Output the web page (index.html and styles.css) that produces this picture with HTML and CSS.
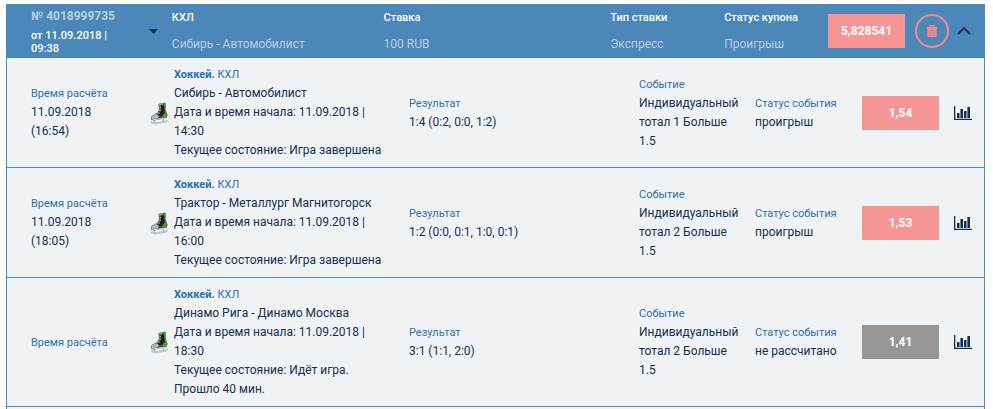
FILE: index.html
```
<!DOCTYPE html>
<html lang="ru">
  <head>
    <meta charset="UTF-8" />
    <meta name="viewport" content="width=device-width, initial-scale=1.0" />
    <title>История ставок</title>
    <link rel="stylesheet" href="styles.css">
  </head>
  <body>
    <!-- shared icons -->
    <svg class="sprite" aria-hidden="true">
      <symbol id="skate" viewBox="0 0 20 24">
        <path d="M1 21 L5 22.5 L16 20.5 L17.5 19" fill="none" stroke="#b5cbd3" stroke-width="2" />
        <path d="M4 19 L5 22 M13 18 L14 21" stroke="#a9b6bb" stroke-width="1.5" />
        <path d="M8.5 3 L14.5 1.5 L16 3 L15.5 8 L17.5 14 L16.5 17 L4 19.5 L1 18.5 L1.5 15 L7 12 L9 9 Z" fill="#4a4e4e" />
        <path d="M11 4 L14 3 L14 9 L15 13 L12 15 L8 15 L8 13 L11 10 Z" fill="#1d2020" />
        <path d="M8.5 3 L13 2 L12.5 4 L9 5 Z" fill="#979d9d" />
        <path d="M13 2 L16 2 L16 6 L14 5.5 Z" fill="#35b51c" />
        <path d="M15 8 L17.5 14 L16.5 16 L12 16.5 L13.5 13 L15 12 Z" fill="#4a9a2c" />
        <path d="M1.5 15.5 L6 13 L9 15 L7.5 17.5 L2 18 Z" fill="#b4b9b9" />
        <path d="M8.5 7 L11 6.5 M8.5 9.5 L11 9 M7 12 L10 12" stroke="#b0b5b5" />
        <path d="M2 19 L16 17" stroke="#d5dada" />
      </symbol>
      <symbol id="chart" viewBox="0 0 18 14">
        <path d="M0 0 H1.3 V12.7 H18 V14 H0 Z" />
        <path d="M3 7 H5.5 V12 H3 Z M6.4 3 H9 V12 H6.4 Z M10 5 H12.5 V12 H10 Z M13.4 1 H16 V12 H13.4 Z" />
      </symbol>
    </svg>

    <div class="coupon">
      <div class="coupon-header">
        <div class="coupon-number">
          <div class="number">№ 4018999735</div>
          <div class="date">от 11.09.2018 | 09:38</div>
        </div>
        <button type="button" class="icon-btn caret" aria-label="Меню купона">
          <svg width="9" height="5" viewBox="0 0 9 5"><path d="M0 0 H9 L4.5 5 Z" /></svg>
        </button>
        <div class="info">
          <div class="info-title">КХЛ</div>
          <div class="info-value">Сибирь - Автомобилист</div>
        </div>
        <div class="info">
          <div class="info-title">Ставка</div>
          <div class="info-value">100 RUB</div>
        </div>
        <div class="info">
          <div class="info-title">Тип ставки</div>
          <div class="info-value">Экспресс</div>
        </div>
        <div class="info">
          <div class="info-title">Статус купона</div>
          <div class="info-value">Проигрыш</div>
        </div>
        <div class="coef">5,828541</div>
        <button type="button" class="icon-btn trash" aria-label="Удалить">
          <svg width="12" height="12" viewBox="0 0 12 12">
            <path d="M4 2 V0.7 H8 V2" fill="none" stroke="#f08a8e" stroke-width="1.2" />
            <path d="M0.5 1.8 H11.5 V3.2 H0.5 Z M1.2 3 H10.8 V11 L10 12 H2 L1.2 11 Z" fill="#f08a8e" />
            <path d="M3.8 4.5 V10.5 M6 4.5 V10.5 M8.2 4.5 V10.5" stroke="#a98ba2" stroke-width="0.9" />
          </svg>
        </button>
        <button type="button" class="icon-btn chevron" aria-label="Свернуть">
          <svg width="14" height="8" viewBox="0 0 14 8"><path d="M1 7 L7 1 L13 7" /></svg>
        </button>
      </div>

      <div class="event-row">
        <div class="time">
          <div class="label">Время расчёта</div>
          <div>11.09.2018 (16:54)</div>
        </div>
        <svg class="skate"><use href="#skate" /></svg>
        <div class="details">
          <div class="label"><b>Хоккей.</b> КХЛ</div>
          <div>Сибирь - Автомобилист</div>
          <div>Дата и время начала: 11.09.2018 | 14:30</div>
          <div>Текущее состояние: Игра завершена</div>
        </div>
        <div class="result">
          <div class="label">Результат</div>
          <div>1:4 (0:2, 0:0, 1:2)</div>
        </div>
        <div class="event">
          <div class="label">Событие</div>
          <div>Индивидуальный тотал 1 Больше 1.5</div>
        </div>
        <div class="status">
          <div class="label">Статус события</div>
          <div>проигрыш</div>
        </div>
        <div class="coef">1,54</div>
        <a href="#" class="stats" aria-label="Статистика"><svg width="18" height="14"><use href="#chart" /></svg></a>
      </div>

      <div class="event-row">
        <div class="time">
          <div class="label">Время расчёта</div>
          <div>11.09.2018 (18:05)</div>
        </div>
        <svg class="skate"><use href="#skate" /></svg>
        <div class="details">
          <div class="label"><b>Хоккей.</b> КХЛ</div>
          <div>Трактор - Металлург Магнитогорск</div>
          <div>Дата и время начала: 11.09.2018 | 16:00</div>
          <div>Текущее состояние: Игра завершена</div>
        </div>
        <div class="result">
          <div class="label">Результат</div>
          <div>1:2 (0:0, 0:1, 1:0, 0:1)</div>
        </div>
        <div class="event">
          <div class="label">Событие</div>
          <div>Индивидуальный тотал 2 Больше 1.5</div>
        </div>
        <div class="status">
          <div class="label">Статус события</div>
          <div>проигрыш</div>
        </div>
        <div class="coef">1,53</div>
        <a href="#" class="stats" aria-label="Статистика"><svg width="18" height="14"><use href="#chart" /></svg></a>
      </div>

      <div class="event-row">
        <div class="time">
          <div class="label">Время расчёта</div>
        </div>
        <svg class="skate"><use href="#skate" /></svg>
        <div class="details">
          <div class="label"><b>Хоккей.</b> КХЛ</div>
          <div>Динамо Рига - Динамо Москва</div>
          <div>Дата и время начала: 11.09.2018 | 18:30</div>
          <div>Текущее состояние: Идёт игра. Прошло 40 мин.</div>
        </div>
        <div class="result">
          <div class="label">Результат</div>
          <div>3:1 (1:1, 2:0)</div>
        </div>
        <div class="event">
          <div class="label">Событие</div>
          <div>Индивидуальный тотал 2 Больше 1.5</div>
        </div>
        <div class="status">
          <div class="label">Статус события</div>
          <div>не рассчитано</div>
        </div>
        <div class="coef pending">1,41</div>
        <a href="#" class="stats" aria-label="Статистика"><svg width="18" height="14"><use href="#chart" /></svg></a>
      </div>
    </div>
  </body>
</html>
```
FILE: styles.css
```
* {
  box-sizing: border-box;
}
body {
  margin: 0;
  padding: 4px 8px 0 6px;
  background: #fff;
  font-family: Roboto, "Liberation Sans", sans-serif;
  font-size: 12px;
  line-height: 19px;
  color: #14304f;
}
.sprite {
  display: none;
}
.coupon {
  background: #eff3f6;
  border: 1px solid #4b87b9;
  border-width: 0 1px;
  padding-bottom: 2px;
}
.coupon-header {
  display: grid;
  grid-template-columns: 115fr 26px 212fr 227fr 114fr 104fr 77px 52px 27px;
  align-items: center;
  min-height: 54px;
  padding-left: 24px;
  background: #4b87b9;
  color: #fff;
}
.coupon-number {
  padding-right: 24px;
}
.number {
  font-weight: bold;
  line-height: 16px;
  white-space: nowrap;
  color: #b7cfe3;
}
.date {
  margin-top: 5px;
  font-size: 11px;
  font-weight: 500;
  line-height: 13px;
}
.info-title {
  font-size: 11px;
  font-weight: 500;
}
.info-value {
  margin-top: 8px;
  color: #b7cfe3;
}
.icon-btn {
  display: flex;
  align-items: center;
  justify-content: center;
  padding: 0;
  background: none;
  border: none;
  cursor: pointer;
}
.caret {
  width: 16px;
  height: 16px;
  fill: #0f2f4b;
}
.trash {
  width: 34px;
  height: 34px;
  margin-left: 10px;
  border: 2px solid #f08a8e;
  border-radius: 50%;
}
.chevron {
  width: 14px;
  height: 16px;
}
.chevron path {
  fill: none;
  stroke: #123a5c;
  stroke-width: 2;
}
.event-row {
  display: grid;
  grid-template-columns: 119fr 24px 235fr 230fr 116fr 107fr 77px 45px;
  align-items: center;
  padding: 7px 0 7px 24px;
  border-bottom: 1px solid #4b87b9;
}
.label {
  font-size: 11px;
  color: #2f6fab;
}
.time {
  padding-right: 24px;
}
.skate {
  width: 20px;
  height: 24px;
}
.details {
  padding-right: 20px;
}
.event {
  padding-right: 12px;
}
.coef {
  background: #f59595;
  color: #fff;
  font-weight: bold;
  line-height: 34px;
  text-align: center;
}
.pending {
  background: #969696;
}
.stats {
  display: flex;
  padding-left: 15px;
  fill: #14304f;
}
```
